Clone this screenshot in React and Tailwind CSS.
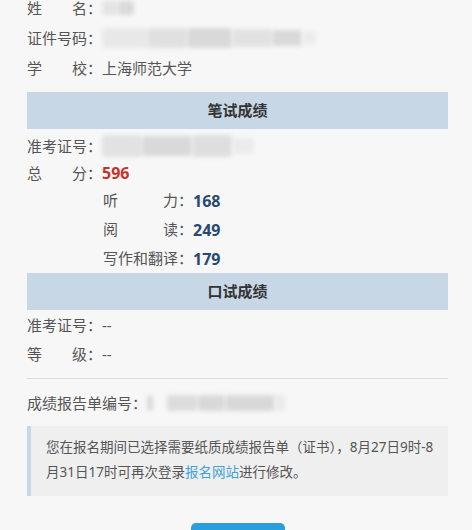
import React from "react";

const font = { fontFamily: '"Noto Sans", "Noto Sans CJK SC", sans-serif' };

function Label({ chars, width = "w-[60px]" }) {
  return (
    <span className={`flex ${width} justify-between shrink-0`}>
      {chars.split("").map((c, i) => (
        <span key={i}>{c}</span>
      ))}
    </span>
  );
}

function Blur({ className }) {
  return <div className={`rounded-sm bg-[#d9d9d9] blur-[2px] ${className}`} />;
}

function Header({ children }) {
  return (
    <div className="flex h-[37px] items-center justify-center bg-[#c8d7e6] text-[15px] font-bold text-[#333]">
      {children}
    </div>
  );
}

export default function App() {
  return (
    <div className="h-[530px] w-[472px] overflow-hidden bg-[#f7f7f7] text-[15px] text-[#555]" style={font}>
      <div className="ml-[27px] mr-[24px] mt-[-7px]">
        <div className="flex h-[30px] items-center">
          <Label chars="姓名" />
          <span>：</span>
          <div className="flex gap-0">
            <Blur className="h-[14px] w-[16px] bg-[#e4e4e4]" />
            <Blur className="h-[14px] w-[16px] bg-[#d2d2d2]" />
          </div>
        </div>
        <div className="flex h-[30px] items-center">
          <Label chars="证件号码" />
          <span>：</span>
          <div className="flex items-center">
            <Blur className="h-[20px] w-[45px] bg-[#e8e8e8]" />
            <Blur className="h-[20px] w-[40px] bg-[#e0e0e0]" />
            <Blur className="h-[20px] w-[45px] bg-[#d9d9d9]" />
            <Blur className="h-[18px] w-[40px] bg-[#e2e2e2]" />
            <Blur className="h-[16px] w-[30px] bg-[#d8d8d8]" />
            <Blur className="h-[14px] w-[14px] bg-[#ececec]" />
          </div>
        </div>
        <div className="flex h-[30px] items-center">
          <Label chars="学校" />
          <span>：</span>
          <span>上海师范大学</span>
        </div>

        <div className="mt-[9px]">
          <Header>笔试成绩</Header>
        </div>

        <div className="mt-[3px] flex h-[28px] items-center">
          <Label chars="准考证号" />
          <span>：</span>
          <div className="flex items-center">
            <Blur className="h-[22px] w-[40px] bg-[#e2e2e2]" />
            <Blur className="h-[20px] w-[50px] bg-[#d8d8d8]" />
            <Blur className="h-[22px] w-[40px] bg-[#dedede]" />
            <Blur className="h-[16px] w-[22px] bg-[#ebebeb]" />
          </div>
        </div>
        <div className="flex h-[26px] items-center">
          <Label chars="总分" />
          <span>：</span>
          <span className="font-bold text-[16px] text-[#c8322c]">596</span>
        </div>
        <div className="ml-[76px]">
          {[
            ["听力", "168"],
            ["阅读", "249"],
            ["写作和翻译", "179"],
          ].map(([l, v]) => (
            <div key={l} className="flex h-[29px] items-center">
              <Label chars={l} width="w-[75px]" />
              <span>：</span>
              <span className="font-bold text-[16px] text-[#284a72]">{v}</span>
            </div>
          ))}
        </div>

        <div className="mt-0">
          <Header>口试成绩</Header>
        </div>

        <div className="mt-[1px] flex h-[29px] items-center">
          <Label chars="准考证号" />
          <span>：</span>
          <span>--</span>
        </div>
        <div className="flex h-[29px] items-center">
          <Label chars="等级" />
          <span>：</span>
          <span>--</span>
        </div>

        <div className="mt-[9px] h-px bg-[#dcdcdc]" />

        <div className="mt-[10px] flex h-[28px] items-center">
          <span>成绩报告单编号：</span>
          <div className="flex items-center">
            <Blur className="h-[16px] w-[6px] bg-[#dadada]" />
            <div className="w-[14px]" />
            <Blur className="h-[16px] w-[30px] bg-[#dcdcdc]" />
            <Blur className="h-[16px] w-[28px] bg-[#d4d4d4]" />
            <Blur className="h-[16px] w-[50px] bg-[#d8d8d8]" />
            <Blur className="h-[16px] w-[10px] bg-[#eaeaea]" />
          </div>
        </div>

        <div className="mt-[9px] border-l-4 border-[#c9d6e3] bg-[#efefef] pb-[11px] pl-[15px] pr-2 pt-[9px] text-[13.5px] leading-[25px] text-[#555]">
          <span className="whitespace-nowrap">您在报名期间已选择需要纸质成绩报告单（证书），8月27日9时-8</span>
          <br />
          <span className="whitespace-nowrap">
            月31日17时可再次登录<span className="text-[#3fa3d6]">报名网站</span>进行修改。
          </span>
        </div>

        <div className="mt-[27px] flex justify-center">
          <div className="h-[30px] w-[94px] rounded-[5px] bg-[#2a9fe0]" />
        </div>
      </div>
    </div>
  );
}
